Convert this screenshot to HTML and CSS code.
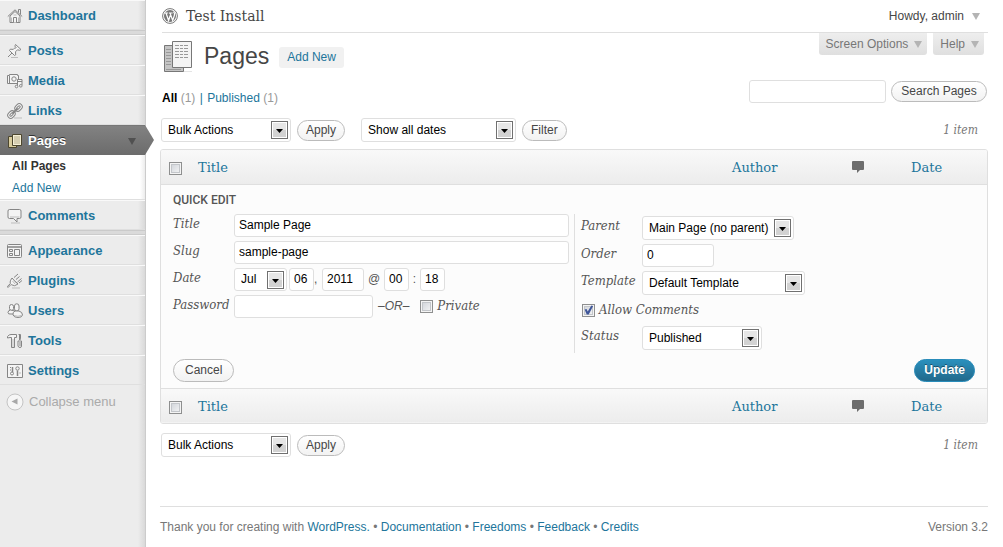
FILE: index.html
```html
<!DOCTYPE html>
<html lang="en">
<head>
<meta charset="utf-8">
<title>Pages ‹ Test Install — WordPress</title>
<link rel="stylesheet" href="styles.css">
</head>
<body>
<svg class="defs" width="0" height="0" aria-hidden="true">
  <symbol id="drop" viewBox="0 0 17 18">
    <rect x=".5" y=".5" width="16" height="17" fill="#fff" stroke="#707070"/>
    <rect x="2" y="2" width="13" height="14" fill="#e6e6e6"/>
    <rect x="2" y="9" width="13" height="7" fill="#d2d2d2"/>
    <path d="M5 8h7L8.500 12z" fill="#000"/>
  </symbol>
  <symbol id="bubble" viewBox="0 0 13 13">
    <path d="M1 0h10q1 0 1 1v7q0 1-1 1H8l-3 3V9H1Q0 9 0 8V1Q0 0 1 0z" fill="#6d6d6d"/>
  </symbol>
</svg>
<div class="layout">
  <nav class="sidebar">
    <ul class="menu">
      <li><a class="item" href="#"><svg viewBox="0 0 16 16"><path d="M3 8v6.500h10V8L8 3.500z"/><path d="M.8 8.500 8 1.800l7.200 6.700M11.500 4.500V1.500h2v5" fill="none"/><path d="M6.500 14.500V9.500h3v5"/><path d="M4.500 14V9.500M11.500 14V9.500M6.500 7h3" class="soft"/></svg>Dashboard</a></li>
      <li class="sep"></li>
      <li><a class="item" href="#"><svg viewBox="0 0 16 16"><path d="m8.500 1.500 5.500 5-1.500.8-2-.5-2 2 .2 3-1.200.7-5-5 .8-1.300 3 .2 2-2-.3-1.600zM5 10l-4 4"/><path d="m8 6 2-2" class="soft"/><path d="M4 14.500h7" class="soft"/></svg>Posts</a></li>
      <li><a class="item" href="#"><svg viewBox="0 0 16 16"><path d="M.5 2.500h2v-1h8v1h1v8H.5zM2.500 3v7"/><circle cx="7" cy="6" r="2.200"/><path d="M10.500 13V6.500h4.500V12"/><path d="M10.500 8.500H15"/><circle cx="9.500" cy="13.500" r="1.300"/><circle cx="13.800" cy="12.800" r="1.300"/></svg>Media</a></li>
      <li><a class="item" href="#"><svg viewBox="0 0 16 16"><g transform="rotate(-45 8 8)"><rect x="-1" y="5" width="8" height="6" rx="3"/><rect x="1" y="7" width="4" height="2" rx="1"/><rect x="9" y="5" width="8" height="6" rx="3"/><rect x="11" y="7" width="4" height="2" rx="1"/><path d="M4.500 8h7" stroke-width="2"/></g><path d="M7 15h8" class="soft"/></svg>Links</a></li>
      <li class="open">
        <a class="item current" href="#"><svg viewBox="0 0 16 16"><path d="M1.500 3.500h8v11h-8z" fill="#d9cd9e" stroke="#4d472f"/><path d="M5.500 1.500h9v11h-9z" fill="#f5efd6" stroke="#4d472f"/><path d="M7 4h6M7 6h6M7 8h6M7 10h6" stroke="#b5ac8c"/></svg>Pages<span class="tri"></span></a>
        <ul class="submenu">
          <li><a class="here" href="#">All Pages</a></li>
          <li><a href="#">Add New</a></li>
        </ul>
      </li>
      <li><a class="item" href="#"><svg viewBox="0 0 16 16"><path d="M2.500 1.500h10q1.500 0 1.500 1.500v6q0 1.500-1.500 1.500H10V14l-3.500-3.500h-4Q1 10.500 1 9V3q0-1.500 1.500-1.500z"/><path d="M3 9h9.500M4 15h9" class="soft"/></svg>Comments</a></li>
      <li class="sep"></li>
      <li><a class="item" href="#"><svg viewBox="0 0 16 16"><rect x=".5" y="1.500" width="14" height="13" rx="1"/><path d="M1 4h13" stroke-width="1.500"/><path d="M7.500 6.500h5v6h-5zM2.500 6.500h3v2h-3zM2.500 10.500h3v2h-3z"/></svg>Appearance</a></li>
      <li><a class="item" href="#"><svg viewBox="0 0 16 16"><path d="m5 5 6 6q-3.500 3-6.500.8T5 5zM7 4.500l4-3.500M9 6.500l3.500-3M10.500 9l4-3.500M12 10l3-2.500M3.500 12 1 14.500l-.5-1.200L3 11"/><path d="m5.500 8 2.500 3M6 6.500l3.500 4M5 15h8" class="soft"/></svg>Plugins</a></li>
      <li><a class="item" href="#"><svg viewBox="0 0 16 16"><rect x="2.500" y="1.500" width="4" height="6" rx="2"/><path d="M3.500 7Q1 7.500 1 9.500t3 1.500h3l1-3z"/><rect x="7.500" y=".8" width="4.500" height="7.200" rx="2.200"/><path d="M8 8q-2.500 1-2 4 1 2.500 5 2.500t4.500-2.500Q15.500 9 12 8z"/><path d="M7 12.500q4 1.500 7.500 0" class="soft"/></svg>Users</a></li>
      <li><a class="item" href="#"><svg viewBox="0 0 16 16"><path d="M.5 5V3.500Q2 1.500 4 1.500h5.500v3H7.500v10h-3v-10H3Z"/><path d="M6 6v8" class="soft"/><path d="M12.500 1v6M11.500 1.500h2V5l-.5 2M11 8h3.500v5q0 1.500-1.500 1.500T11 13zM13 9v4"/></svg>Tools</a></li>
      <li><a class="item" href="#"><svg viewBox="0 0 16 16"><path d="M.5 1.500h15v13H.5z"/><path d="M5.500 4v5M10.500 7.500V13" stroke-width="1.500"/><circle cx="5" cy="10.500" r="1.500"/><circle cx="10.500" cy="5.500" r="1.700"/><path d="M3 4.500h1M3 7h1M12.500 10h1"/></svg>Settings</a></li>
    </ul>
    <button class="collapse" type="button"><svg viewBox="0 0 18 18"><circle cx="9" cy="9" r="8" fill="#f6f6f6" stroke="#c4c4c4"/><path d="M11.500 5.500v6L5.500 8.500z" fill="#a8a8a8"/></svg>Collapse menu</button>
  </nav>

  <div class="content">
    <header class="top">
      <svg class="wp" viewBox="0 0 16 16"><circle cx="8" cy="8" r="7.400" fill="#fff" stroke="#777"/><circle cx="8" cy="8" r="6" fill="#777"/><path d="M2.500 5h3.700M7 5h3.600M4 5l2.600 7.500L8.200 7.500M8 5l2.700 7.500 1.700-5.200q.7-2-.9-3.500" fill="none" stroke="#fff" stroke-width="1.200"/></svg>
      <a class="site" href="#">Test Install</a>
      <button class="user" type="button">Howdy, admin<span class="tri"></span></button>
    </header>
    <div class="screen-tabs">
      <button type="button">Screen Options<span class="tri"></span></button>
      <button type="button">Help<span class="tri"></span></button>
    </div>

    <main class="wrap">
      <div class="heading">
        <svg viewBox="0 0 32 34"><path d="M2.500 5.500h19v26h-19z" fill="#c4c4c4" stroke="#777"/><path d="M4 9.500h5M4 12.500h5M4 15.500h5M4 18.500h5M4 21.500h5M4 24.500h5M4 29.500h15" stroke="#999"/><path d="M22 31.500h8" stroke="#e4e4e4"/><path d="M10.500 1.500h19v26h-19z" fill="#f4f4f4" stroke="#777"/><path d="M13 5.500h14M13 8.500h14M13 11.500h14M13 14.500h14M13 17.500h14" stroke="#999" stroke-dasharray="4 1 3 1"/></svg>
        <h1>Pages</h1>
        <a class="add" href="#">Add New</a>
      </div>

      <div class="filters">
        <p><a class="all" href="#">All</a> <span>(1)</span> <b>|</b> <a href="#">Published</a> <span>(1)</span></p>
        <form class="search"><input type="text" aria-label="Search pages"><button class="btn" type="button">Search Pages</button></form>
      </div>

      <div class="tablenav">
        <span class="select w130"><select aria-label="Bulk actions"><option>Bulk Actions</option></select><svg><use href="#drop"/></svg></span>
        <button class="btn" type="button">Apply</button>
        <span class="select w155 dates"><select aria-label="Dates"><option>Show all dates</option></select><svg><use href="#drop"/></svg></span>
        <button class="btn" type="button">Filter</button>
        <span class="count">1 item</span>
      </div>

      <div class="panel">
        <table>
          <colgroup><col class="c-check"><col><col class="c-author"><col class="c-comments"><col class="c-date"></colgroup>
          <thead><tr>
            <th><input type="checkbox" aria-label="Select all"></th>
            <th><a href="#">Title</a></th><th><a href="#">Author</a></th>
            <th><svg class="bubble" role="img" aria-label="Comments"><use href="#bubble"/></svg></th>
            <th><a href="#">Date</a></th>
          </tr></thead>
          <tfoot><tr>
            <th><input type="checkbox" aria-label="Select all"></th>
            <th><a href="#">Title</a></th><th><a href="#">Author</a></th>
            <th><svg class="bubble" role="img" aria-label="Comments"><use href="#bubble"/></svg></th>
            <th><a href="#">Date</a></th>
          </tr></tfoot>
          <tbody><tr><td colspan="5">
            <form class="quick">
              <h2>QUICK EDIT</h2>
              <div class="cols">
                <div class="left">
                  <div class="row"><label for="t">Title</label><input class="grow" id="t" type="text" value="Sample Page"></div>
                  <div class="row"><label for="s">Slug</label><input class="grow" id="s" type="text" value="sample-page"></div>
                  <div class="row date"><label for="m">Date</label><span class="select month"><select id="m"><option>Jul</option></select><svg><use href="#drop"/></svg></span><input class="two" type="text" value="06" aria-label="Day"><span class="comma">,</span><input class="four" type="text" value="2011" aria-label="Year"><span class="at">@</span><input class="two" type="text" value="00" aria-label="Hour"><span class="colon">:</span><input class="two" type="text" value="18" aria-label="Minute"></div>
                  <div class="row"><label for="p">Password</label><input class="pass" id="p" type="text"><em class="or">–OR–</em><input type="checkbox" id="pr"><label class="tick" for="pr">Private</label></div>
                </div>
                <div class="right">
                  <div class="row"><label for="pa">Parent</label><span class="select w152"><select id="pa"><option>Main Page (no parent)</option></select><svg><use href="#drop"/></svg></span></div>
                  <div class="row"><label for="o">Order</label><input class="order" id="o" type="text" value="0"></div>
                  <div class="row"><label for="te">Template</label><span class="select w163"><select id="te"><option>Default Template</option></select><svg><use href="#drop"/></svg></span></div>
                  <div class="row allow"><input type="checkbox" id="ac" checked><label class="tick" for="ac">Allow Comments</label></div>
                  <div class="row"><label for="st">Status</label><span class="select w120"><select id="st"><option>Published</option></select><svg><use href="#drop"/></svg></span></div>
                </div>
              </div>
              <div class="actions"><button class="btn tall" type="button">Cancel</button><button class="btn tall primary" type="button">Update</button></div>
            </form>
          </td></tr></tbody>
        </table>
      </div>

      <div class="tablenav bottom">
        <span class="select w130"><select aria-label="Bulk actions"><option>Bulk Actions</option></select><svg><use href="#drop"/></svg></span>
        <button class="btn" type="button">Apply</button>
        <span class="count">1 item</span>
      </div>
    </main>

    <footer>
      <p>Thank you for creating with <a href="#">WordPress.</a> • <a href="#">Documentation</a> • <a href="#">Freedoms</a> • <a href="#">Feedback</a> • <a href="#">Credits</a></p>
      <p>Version 3.2</p>
    </footer>
  </div>
</div>
</body>
</html>
```

FILE: styles.css
```css
* { box-sizing: border-box; }
body { margin: 0; background: #fff; color: #333; font: 12px/16px "Liberation Sans", Arial, sans-serif; }
a { color: #21759b; text-decoration: none; }
ul, p, h1, h2 { margin: 0; padding: 0; }
ul { list-style: none; }
button, input, select { font: inherit; margin: 0; }
.defs { position: absolute; }
.tri { display: inline-block; border: 4px solid transparent; border-top: 7px solid #b4b4b4; border-bottom: 0; }

.layout { display: flex; min-height: 100vh; }

/* Sidebar */
.sidebar { flex: none; width: 146px; background: linear-gradient(to left, #d9d9d9, #ececec 7px); border-right: 1px solid #ccc; }
.item { display: flex; align-items: center; gap: 5px; height: 30px; padding: 2px 0 0 7px; border-top: 1px solid #f9f9f9; border-bottom: 1px solid #dfdfdf; font-size: 13px; font-weight: bold; }
.item svg { width: 16px; height: 16px; fill: #f4f4f4; stroke: #858585; stroke-width: 1; }
.item .soft { stroke: #bdbdbd; fill: none; }
.sep { height: 5px; background: #dadada; border-top: 1px solid #cacaca; border-bottom: 1px solid #ccc; }
.current { position: relative; color: #fff; background: linear-gradient(#828282, #6c6c6c); border-color: #777 transparent #6c6c6c; text-shadow: 0 -1px 0 #333; }
.current::after { content: ""; position: absolute; left: 100%; top: -1px; width: 9px; height: 30px; background: linear-gradient(#828282, #6c6c6c); clip-path: polygon(0 0, 100% 50%, 0 100%); }
.current .tri { margin-left: auto; margin-right: 9px; border-top-color: #505050; }
.submenu { height: 45px; padding-left: 12px; background: linear-gradient(to left, #ececec, #fff 5px); border-bottom: 1px solid #dfdfdf; }
.submenu a { display: block; height: 22px; line-height: 22px; }
.submenu .here { color: #333; font-weight: bold; }
.collapse { display: flex; align-items: center; gap: 5px; height: 34px; padding: 0 0 0 6px; border: 0; background: none; color: #aaa; font-size: 13px; }
.collapse svg { width: 18px; height: 18px; }

/* Header */
.content { flex: 1; min-width: 0; padding: 0 15px 0 14px; }
.top { display: flex; align-items: center; height: 33px; margin-left: 2px; border-bottom: 1px solid #dfdfdf; }
.wp { width: 16px; height: 16px; margin-right: 8px; }
.site { color: #464646; font: 14px/18px "DejaVu Serif", serif; }
.user { display: flex; align-items: center; gap: 8px; margin-left: auto; padding: 0 8px 0 0; border: 0; background: none; color: #464646; }
.screen-tabs { display: flex; justify-content: flex-end; gap: 6px; height: 10px; margin-right: 4px; }
.screen-tabs button { display: flex; align-items: center; gap: 6px; height: 22px; padding: 0 5px 0 7px; border: 0; border-radius: 0 0 3px 3px; background: linear-gradient(#eee, #dfdfdf); color: #777; }
.heading { display: flex; align-items: center; height: 28px; }
.heading svg { width: 32px; height: 34px; margin: 0 10px 0 2px; }
.heading h1 { color: #464646; font-size: 23px; font-weight: normal; line-height: 26px; padding-bottom: 2px; }
.add { margin-left: 10px; padding: 2px 8px 3px; border-radius: 3px; background: #f1f1f1; }

.filters { display: flex; justify-content: space-between; align-items: center; height: 40px; padding: 0 1px 0 2px; }
.filters p { padding-top: 14px; }
.filters span { color: #999; }
.filters b { margin: 0 1px; font-weight: normal; color: #21759b; }
.filters .all { color: #000; font-weight: bold; }
.search { display: flex; align-items: center; gap: 5px; }
.search input { width: 137px; }
.search .btn { width: 96px; }

/* Controls */
input[type="text"] { height: 23px; padding: 0 4px; border: 1px solid #dfdfdf; border-radius: 3px; background: #fff; color: #000; }
.select { position: relative; display: inline-block; height: 24px; }
.select select { appearance: none; width: 100%; height: 24px; padding: 0 6px; border: 1px solid #dfdfdf; border-radius: 3px; background: #fff; color: #000; }
.select svg { position: absolute; right: 3px; top: 3px; width: 17px; height: 18px; pointer-events: none; }
.w120 { width: 120px; }
.w130 { width: 130px; }
.w152 { width: 152px; }
.w155 { width: 155px; }
.w163 { width: 163px; }
.btn { height: 21px; padding: 0 8px; border: 1px solid #bbb; border-radius: 11px; background: linear-gradient(#fff, #f2f2f2); color: #464646; white-space: nowrap; }
.tall { height: 23px; padding: 0 11px; border-radius: 12px; }
.primary { border-color: #298cba; background: linear-gradient(#2a90bd, #21698b); color: #fff; font-weight: bold; padding: 0 9px; text-shadow: 0 -1px 0 #1a4f68; }
input[type="checkbox"] { appearance: none; flex: none; display: block; width: 13px; height: 13px; border: 1px solid #8e8f8f; background: linear-gradient(135deg, #ccd0d6, #f8f8f8); box-shadow: inset 0 0 0 1px #f4f4f4, inset 0 0 0 2px #c3c6ca; }
input[type="checkbox"]:checked::before { content: ""; display: block; width: 11px; height: 11px; background: #3f5699; clip-path: polygon(15% 45%, 32% 42%, 43% 64%, 76% 8%, 92% 14%, 52% 92%, 34% 92%); }

.tablenav { display: flex; align-items: center; gap: 6px; height: 38px; padding: 0 10px 0 1px; }
.bottom { height: 42px; }
.dates { margin-left: 10px; }
.count, .quick label { font: italic 13px/16px "DejaVu Serif Condensed", "DejaVu Serif", serif; }
.count { margin-left: auto; color: #777; font-size: 12px; }

/* Table */
.panel { border: 1px solid #dfdfdf; border-radius: 3px; overflow: hidden; background: #fcfcfc; }
table { width: 100%; border-collapse: collapse; table-layout: fixed; }
.c-check { width: 30px; }
.c-author { width: 118px; }
.c-comments { width: 61px; }
.c-date { width: 83px; }
th { height: 34px; padding: 2px 7px 0; text-align: left; font: 13px/18px "DejaVu Serif", serif; background: linear-gradient(#f9f9f9, #ececec); }
thead th { border-bottom: 1px solid #dfdfdf; }
tfoot th { height: 35px; border-top: 1px solid #dfdfdf; }
th input[type="checkbox"] { margin: 2px 0 0 1px; }
.bubble { display: block; width: 13px; height: 13px; margin-left: 2px; }
td { padding: 0; }

/* Quick edit */
.quick { padding: 6px 12px; color: #555; }
.quick h2 { color: #555; font: 500 12px/18px Roboto, sans-serif; }
.cols { display: grid; grid-template-columns: 1fr 1fr; padding-top: 5px; }
.left, .right { display: grid; gap: 4px; align-content: start; }
.left { padding-right: 5px; }
.right { padding: 2px 0 3px 6px; border-left: 1px solid #dfdfdf; }
.row { display: flex; align-items: center; min-height: 23px; }
.row > label:first-child { flex: none; align-self: flex-start; width: 61px; margin-top: 2px; }
.grow { flex: 1; min-width: 0; }
.month { width: 53px; margin-right: 2px; }
.date .select, .date .select select { height: 23px; }
.two { width: 25px; }
.four { width: 42px; }
.order { width: 72px; }
.comma { width: 8px; }
.at { width: 20px; text-align: center; }
.colon { width: 11px; text-align: center; }
.pass { width: 139px; }
.or { margin: 0 11px 0 5px; }
.tick { margin-left: 4px; }
.allow { padding-left: 1px; }
.actions { display: flex; justify-content: space-between; padding-top: 6px; }

/* Footer */
footer { display: flex; justify-content: space-between; margin-top: 40px; padding-top: 12px; border-top: 1px solid #dfdfdf; color: #777; }
```
